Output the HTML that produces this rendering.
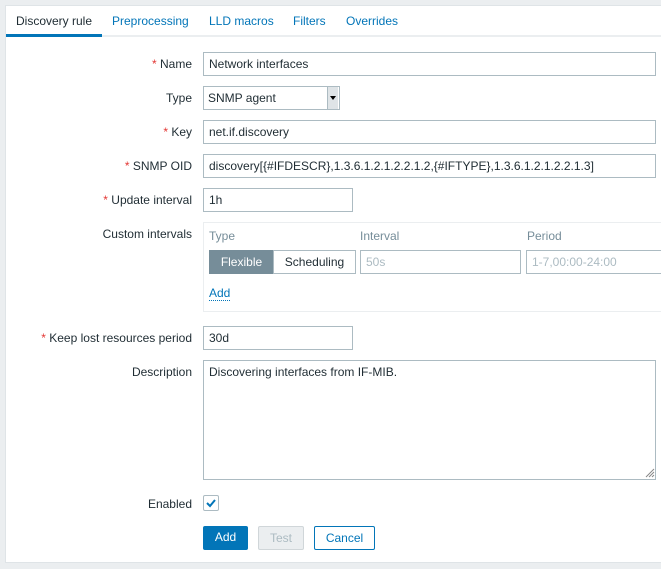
<!DOCTYPE html>
<html><head><style>
*{box-sizing:border-box}
body{margin:0;width:661px;height:569px;background:#ebeef0;font:12px "Liberation Sans",Arial,sans-serif;color:#1f2c33;position:relative;overflow:hidden}
.panel{position:absolute;left:5px;top:5px;width:656px;height:558px;background:#fff;border:1px solid #dfe4e7;border-right:none}
.tabs{position:absolute;left:6px;top:6px;right:0;height:31px;border-bottom:2px solid #ebeef0}
.tab{position:absolute;top:8px;color:#0275b8;font-size:12px}
.tab.a{color:#1f2c33}
.ul{position:absolute;left:6px;top:34px;width:96px;height:3px;background:#0275b8}
.lbl{position:absolute;right:469px;text-align:right;white-space:nowrap}
.lbl i{color:#e33734;font-style:normal}
.in{position:absolute;left:203px;height:24px;border:1px solid #acbbc2;padding:4px 5px;white-space:nowrap;overflow:hidden;background:#fff}
.ph{color:#acbbc2}
.btn{position:absolute;height:24px;text-align:center;line-height:22px}
</style></head><body>
<div class="panel"></div>
<div class="tabs"></div>
<div class="ul"></div>
<span class="tab a" style="left:16px;top:14px">Discovery rule</span>
<span class="tab" style="left:112px;top:14px">Preprocessing</span>
<span class="tab" style="left:209px;top:14px">LLD macros</span>
<span class="tab" style="left:293px;top:14px">Filters</span>
<span class="tab" style="left:346px;top:14px">Overrides</span>

<div class="lbl" style="top:57px"><i>*</i> Name</div>
<div class="in" style="top:52px;width:453px">Network interfaces</div>
<div class="lbl" style="top:91px">Type</div>
<div class="in" style="top:86px;width:137px;padding-left:4px">SNMP agent</div>
<div style="position:absolute;left:327px;top:87px;width:11px;height:22px;background:#dfe4e7;border-left:1px solid #acbbc2"><div style="position:absolute;left:2px;top:9px;border:3px solid transparent;border-top:4px solid #000"></div></div>
<div class="lbl" style="top:125px"><i>*</i> Key</div>
<div class="in" style="top:120px;width:453px">net.if.discovery</div>
<div class="lbl" style="top:159px"><i>*</i> SNMP OID</div>
<div class="in" style="top:154px;width:453px">discovery[{#IFDESCR},1.3.6.1.2.1.2.2.1.2,{#IFTYPE},1.3.6.1.2.1.2.2.1.3]</div>
<div class="lbl" style="top:193px"><i>*</i> Update interval</div>
<div class="in" style="top:188px;width:150px">1h</div>
<div class="lbl" style="top:227px">Custom intervals</div>
<div style="position:absolute;left:203px;top:222px;width:460px;height:90px;border:1px solid #ebeef0"></div>
<span style="position:absolute;left:209px;top:229px;color:#768d99">Type</span>
<span style="position:absolute;left:360px;top:229px;color:#768d99">Interval</span>
<span style="position:absolute;left:527px;top:229px;color:#768d99">Period</span>
<div class="btn" style="left:209px;top:250px;width:65px;background:#768d99;color:#fff;border:1px solid #768d99">Flexible</div>
<div class="btn" style="left:273px;top:250px;width:83px;border:1px solid #acbbc2">Scheduling</div>
<div class="in ph" style="left:360px;top:250px;width:161px">50s</div>
<div class="in ph" style="left:526px;top:250px;width:140px">1-7,00:00-24:00</div>
<span style="position:absolute;left:209px;top:286px;color:#0275b8;border-bottom:1px dotted #0275b8;line-height:14px">Add</span>
<div class="lbl" style="top:331px"><i>*</i> Keep lost resources period</div>
<div class="in" style="top:326px;width:150px">30d</div>
<div class="lbl" style="top:365px">Description</div>
<div class="in" style="top:360px;width:453px;height:120px">Discovering interfaces from IF-MIB.</div>
<svg style="position:absolute;left:645px;top:468px" width="10" height="10"><path d="M9 1L1 9M9 4L4 9M9 7L7 9" stroke="#888" stroke-width="1"/></svg>
<div class="lbl" style="top:497px">Enabled</div>
<div style="position:absolute;left:203px;top:495px;width:16px;height:16px;border:1px solid #acbbc2;border-radius:2px"><svg width="14" height="14" style="position:absolute;left:0;top:0"><path d="M3 7L6 10L11 4" stroke="#0275b8" stroke-width="2" fill="none"/></svg></div>
<div class="btn" style="left:203px;top:526px;width:45px;background:#0275b8;color:#fff;border-radius:2px">Add</div>
<div class="btn" style="left:258px;top:526px;width:46px;background:#ebeef0;color:#acbbc2;border:1px solid #d0d6d9;border-radius:2px">Test</div>
<div class="btn" style="left:314px;top:526px;width:61px;color:#0275b8;border:1px solid #0275b8;border-radius:2px">Cancel</div>
</body></html>
